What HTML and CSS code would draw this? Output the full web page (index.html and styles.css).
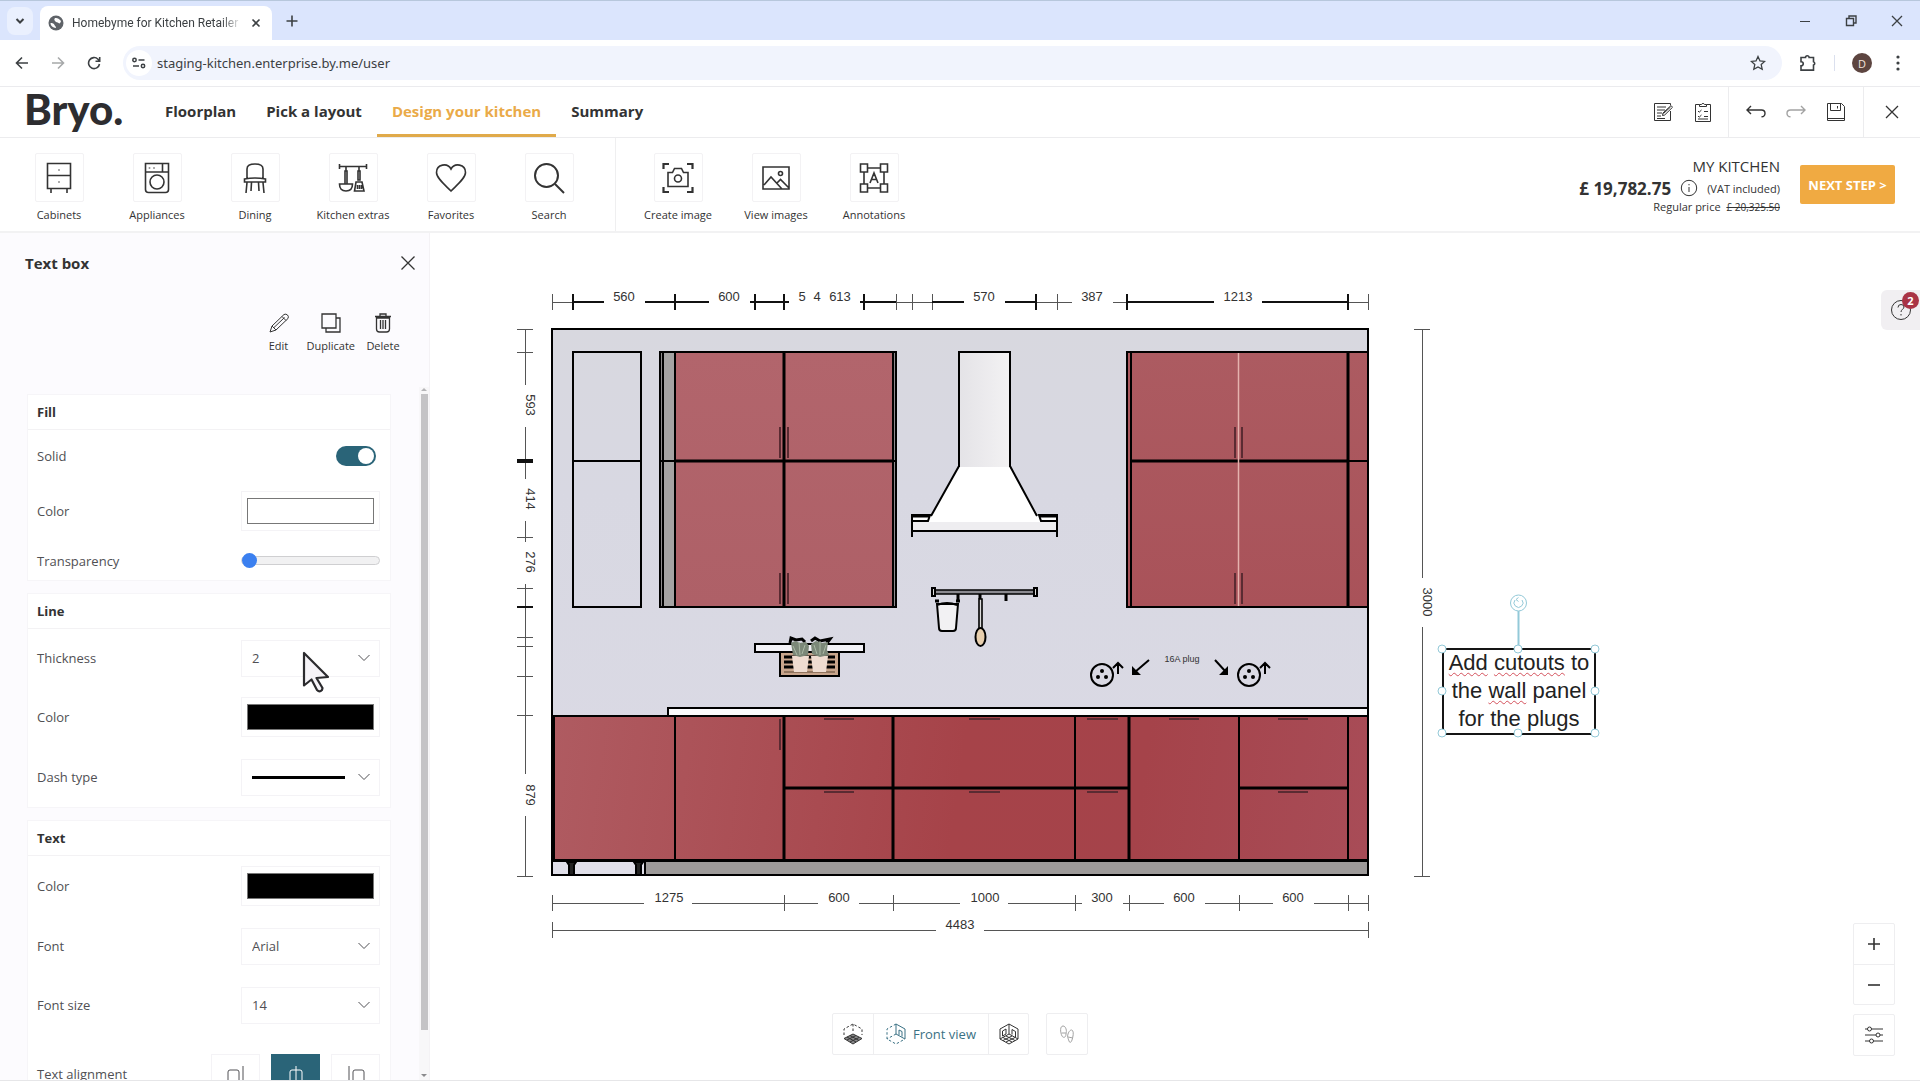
FILE: index.html
```html
<!DOCTYPE html>
<html lang="en">
<head>
<meta charset="utf-8">
<meta name="viewport" content="width=device-width, initial-scale=1">
<title>Homebyme for Kitchen Retailer</title>
<link rel="stylesheet" href="styles.css">
</head>
<body>
<div class="tabstrip">
  <button class="tab-search" aria-label="Search tabs"><svg width="10" height="10" viewBox="0 0 10 10"><path d="M1.500 3 5 6.500 8.500 3" stroke-width="2"/></svg></button>
  <div class="tab">
    <svg width="16" height="16" viewBox="0 0 16 16"><circle cx="8" cy="8" r="7.500" fill="#5f6368" stroke="none"/><path d="M2.500 8c2 0 3.500.5 4 2s1.500 1 1.500 3c-3-.5-5.500-2-5.500-5zM7 3c2-.5 4 .5 6 3-.5 2-1.500 3-2.500 2S8 7.500 7.500 6.500 5.500 5 7 3z" fill="#fff" stroke="none"/></svg>
    <span class="tab-title">Homebyme for Kitchen Retailer</span>
    <button class="tab-close" aria-label="Close tab"><svg width="10" height="10" viewBox="0 0 10 10"><path d="M1.500 1.500l7 7M8.500 1.500l-7 7" stroke-width="1.600"/></svg></button>
  </div>
  <button class="tab-new" aria-label="New tab"><svg width="12" height="12" viewBox="0 0 12 12"><path d="M6 .5v11M.5 6h11" stroke-width="1.600"/></svg></button>
  <div class="window-buttons">
    <button aria-label="Minimize"><svg width="12" height="12" viewBox="0 0 12 12"><path d="M1 6.500h10"/></svg></button>
    <button aria-label="Restore"><svg width="12" height="12" viewBox="0 0 12 12"><path d="M1.500 3.500h7v7h-7zM4 3V1h7v7H9" stroke-width="1.400"/></svg></button>
    <button aria-label="Close window"><svg width="12" height="12" viewBox="0 0 12 12"><path d="M1 1l10 10M11 1L1 11" stroke-width="1.300"/></svg></button>
  </div>
</div>

<div class="addressbar">
  <button aria-label="Back"><svg width="14" height="14" viewBox="0 0 14 14"><path d="M13 7H1.500M7 1.500 1.500 7 7 12.500" stroke-width="1.600"/></svg></button>
  <button class="dim" aria-label="Forward"><svg width="14" height="14" viewBox="0 0 14 14"><path d="M1 7h11.500M7 1.500 12.500 7 7 12.500" stroke-width="1.600"/></svg></button>
  <button aria-label="Reload"><svg width="14" height="14" viewBox="0 0 14 14"><path d="M12.500 8A5.500 5.500 0 1 1 11 3.200L12.500 5M12.700 1v4.200H8.500" stroke-width="1.600"/></svg></button>
  <div class="omnibox">
    <span class="site-info"><svg width="14" height="12" viewBox="0 0 14 12"><g stroke-width="1.500"><circle cx="2.500" cy="3" r="1.700"/><path d="M6.500 3h6M1 9h6"/><circle cx="11" cy="9" r="1.700"/></g></svg></span>
    <input class="url" type="text" aria-label="Address" value="staging-kitchen.enterprise.by.me/user">
    <button class="star" aria-label="Bookmark"><svg width="16" height="16" viewBox="0 0 16 16"><path d="M8 1.500l2 4.400 4.700.5-3.500 3.200 1 4.700L8 11.900l-4.200 2.400 1-4.700L1.300 6.400 6 5.900z" stroke-width="1.300"/></svg></button>
  </div>
  <button aria-label="Extensions"><svg width="18" height="18" viewBox="0 0 18 18"><path d="M2 3.500h4.500a1.800 1.800 0 0 1 3.600 0h4.400v4.200a1.800 1.800 0 0 1 0 3.400v5H2v-4.300c3 0 3-4 0-4z" stroke-width="1.600"/></svg></button>
  <span class="bar-divider"></span>
  <button class="avatar" aria-label="Profile">D</button>
  <button class="more" aria-label="Menu"><svg width="4" height="16" viewBox="0 0 4 16"><g fill="#3c4043" stroke="none"><circle cx="2" cy="2" r="1.600"/><circle cx="2" cy="8" r="1.600"/><circle cx="2" cy="14" r="1.600"/></g></svg></button>
</div>

<header class="app-header">
  <a class="logo" href="#">Bryo.</a>
  <nav class="steps">
    <a href="#">Floorplan</a>
    <a href="#">Pick a layout</a>
    <a class="current" href="#">Design your kitchen</a>
    <a href="#">Summary</a>
  </nav>
  <div class="header-group notes">
    <button aria-label="Notes"><svg width="20" height="20" viewBox="0 0 20 20"><path d="M17.500 9v9.500h-16v-17h16V3M4 5h9M4 8h8M4 11h5M4 14h4M4 16.500h8"/><path d="M9.500 13.500l.5-2.500L18 3.500l1.500 1.800-7.800 7.700zM10.500 11.500l7-6.500" /></svg></button>
    <button aria-label="Checklist"><svg width="18" height="20" viewBox="0 0 18 20"><path d="M5.500 2.500h-4v17h15v-17h-4M5.500 4.500v-2h2a1.600 1.600 0 0 1 3 0h2v2zM4 9l1.200 1.200L7.500 8M4 14l1.200 1.200L7.500 13M10 9.500h4M10 14.500h4M4 17h10" /></svg></button>
  </div>
  <div class="header-group">
    <button aria-label="Undo"><svg width="20" height="14" viewBox="0 0 20 14"><path d="M5 1 1 5l4 4M1 5h14.500c2.500 0 3.500 1.500 3.500 3.200 0 2-1.200 3.600-3.500 3.600" stroke-width="1.400"/></svg></button>
    <button class="dim" aria-label="Redo"><svg width="20" height="14" viewBox="0 0 20 14"><path d="M15 1l4 4-4 4M19 5H4.500C2 5 1 6.500 1 8.200c0 2 1.200 3.600 3.500 3.600" stroke-width="1.400"/></svg></button>
    <button aria-label="Save"><svg width="20" height="20" viewBox="0 0 20 20"><path d="M1.500 1.500h14l3 3v14h-17zM4.500 1.500v7h10v-7M11.500 4v2.500M1.500 16.500h17"/></svg></button>
  </div>
  <div class="header-group last">
    <button aria-label="Close"><svg width="16" height="16" viewBox="0 0 16 16"><path d="M2 2l12 12M14 2L2 14" stroke-width="1.300"/></svg></button>
  </div>
</header>

<div class="toolbar">
  <div class="tools">
    <button class="tool"><span class="tile"><svg width="26" height="32" viewBox="0 0 26 32"><path d="M1.500 1.500h23v25h-23zM1.500 13.500h23M5 27v4M21 27v4M13 7.500v1M13 19.500v1"/></svg></span>Cabinets</button>
    <button class="tool"><span class="tile"><svg width="26" height="32" viewBox="0 0 26 32"><path d="M1.500 1.500h23v26q0 3-3 3h-17q-3 0-3-3zM1.500 10h23M18.500 1.500V10M5.500 5.500v1M10 5.500v1"/><circle cx="13" cy="20" r="7"/></svg></span>Appliances</button>
    <button class="tool"><span class="tile"><svg width="26" height="32" viewBox="0 0 26 32"><path d="M5 16V7q0-5 8-5t8 5v9M2.500 17q10.500-2 21 0v3h-21zM5 20.500 4 31M9.500 20.500 9 29M21 20.500 22 31M16.500 20.500l.5 8.500"/></svg></span>Dining</button>
    <button class="tool"><span class="tile"><svg width="30" height="32" viewBox="0 0 30 32"><path d="M1.500 2v5M28.500 2v5M1.500 4.500h27M8 5v4M21 5v4M7 9h2v13H7zM20 9h2v9h-2zM1.500 22h13q0 7-6.500 7t-6.500-7zM18 20h6l2 9h-9.500zM19.500 23v4M21.500 23v4M23.500 23v4"/></svg></span>Kitchen extras</button>
    <button class="tool"><span class="tile"><svg width="32" height="32" viewBox="0 0 32 32"><path d="M16 29C9 22 1.500 16 1.500 10.500 1.500 2 12.500.5 16 7c3.500-6.500 14.500-5 14.500 3.500C30.500 16 23 22 16 29z"/></svg></span>Favorites</button>
    <button class="tool"><span class="tile"><svg width="32" height="32" viewBox="0 0 32 32"><circle cx="13.500" cy="13.500" r="11.500" stroke-width="2"/><path d="M22 22l9 9" stroke-width="2"/></svg></span>Search</button>
  </div>
  <div class="tools second">
    <button class="tool"><span class="tile"><svg width="32" height="32" viewBox="0 0 32 32"><path d="M1.500 7V2H7M25 2h5.500v5M1.500 25v5H7M25 30h5.500v-5" stroke-width="2.200"/><path d="M6 10.500h4.500l2-4h7l2 4H26v14H6z"/><circle cx="16" cy="16.500" r="3.500"/></svg></span>Create image</button>
    <button class="tool"><span class="tile"><svg width="28" height="26" viewBox="0 0 28 26"><path d="M1 2h26v22H1zM2 20l7-8 11 12M15 18l3.500-3.500L27 23"/><circle cx="18.500" cy="8.500" r="2"/></svg></span>View images</button>
    <button class="tool"><span class="tile"><svg width="30" height="32" viewBox="0 0 30 32"><path d="M1.500 2h7v8h-7zM21.500 2h7v8h-7zM1.500 22h7v8h-7zM21.500 22h7v8h-7zM8.500 6h13M8.500 26h13M5 10v12M25 10v12M11 21l4-10 4 10M12.500 17.500h5"/></svg></span>Annotations</button>
  </div>
  <div class="price">
    <div class="project">MY KITCHEN</div>
    <div class="total"><strong>£ 19,782.75</strong><svg width="18" height="18" viewBox="0 0 18 18"><circle cx="9" cy="9" r="7.700"/><path d="M9 8v5M9 5v1.300"/></svg><span>(VAT included)</span></div>
    <div class="regular">Regular price <s>£ 20,325.50</s></div>
  </div>
  <button class="next">NEXT STEP &gt;</button>
</div>

<main class="workspace">
  <div class="drawing">
    <svg width="1300" height="670" viewBox="310 280 1300 670" role="img" aria-label="Front view of the kitchen">
      <defs>
        <linearGradient id="wall" x1="0" y1="0" x2="0" y2="1"><stop offset="0" stop-color="#d8d8df"/><stop offset=".3" stop-color="#d8d8e2"/><stop offset="1" stop-color="#dbdae5"/></linearGradient>
        <linearGradient id="base" gradientUnits="userSpaceOnUse" x1="553" y1="720" x2="1368" y2="830"><stop offset="0" stop-color="#af5b61"/><stop offset=".5" stop-color="#a64349"/><stop offset=".72" stop-color="#a5434a"/><stop offset="1" stop-color="#a84c57"/></linearGradient>
        <linearGradient id="upperA" x1="0" y1="0" x2="0" y2="1"><stop offset="0" stop-color="#b2656c"/><stop offset="1" stop-color="#ae6067"/></linearGradient>
        <linearGradient id="upperB" x1="0" y1="0" x2="0" y2="1"><stop offset="0" stop-color="#ac5b61"/><stop offset="1" stop-color="#a95259"/></linearGradient>
        <linearGradient id="steel" x1="0" y1="0" x2="1" y2="0"><stop offset="0" stop-color="#e4e3e7"/><stop offset="1" stop-color="#f3f2f3"/></linearGradient>
      </defs>
      <g class="dims">
        <path d="M552 302h52M645 302h64M750 302h39M860 302h104M1005 302h67M1113 302h101M1262 302h106"/>
        <path d="M552 294v16M573 294v16M675 294v16M755 294v16M784 294v16M864 294v16M896 294v16M912 294v16M932 294v16M1036 294v16M1057 294v16M1127 294v16M1348 294v16M1368 294v16"/>
        <path class="strong" d="M573 302h31M645 302h64M750 302h39M860 302h36M932 302h32M1005 302h31M1127 302h87M1262 302h86M573 294v16M675 294v16M755 294v16M784 294v16M864 294v16M1036 294v16M1127 294v16M1348 294v16"/>
        <path d="M525 329v56M525 427v52M525 521v21M525 584v190M525 816v60M517 329h16M517 352h16M517 537h16M517 588h16M517 637h16M517 646h16M517 676h16M517 715h16M517 876h16"/>
        <path class="strong" d="M517 460h16M517 462h16M517 607h16"/>
        <path d="M1422 329v249M1422 627v249M1414 329h16M1414 876h16"/>
        <path d="M552 903h92M692 903h126M859 903h101M1008 903h74M1123 903h41M1205 903h68M1314 903h54M552 895v16M784 895v16M893 895v16M1075 895v16M1129 895v16M1239 895v16M1348 895v16M1368 895v16"/>
        <path d="M552 930h384M984 930h384M552 922v16M1368 922v16"/>
      </g>
      <g class="dim-text">
        <text x="624" y="301">560</text><text x="729" y="301">600</text><text x="802" y="301">5</text><text x="817" y="301">4</text><text x="840" y="301">613</text><text x="984" y="301">570</text><text x="1092" y="301">387</text><text x="1238" y="301">1213</text>
        <text transform="translate(526 405) rotate(90)">593</text><text transform="translate(526 499) rotate(90)">414</text><text transform="translate(526 562) rotate(90)">276</text><text transform="translate(526 795) rotate(90)">879</text><text transform="translate(1423 602) rotate(90)">3000</text>
        <text x="669" y="902">1275</text><text x="839" y="902">600</text><text x="985" y="902">1000</text><text x="1102" y="902">300</text><text x="1184" y="902">600</text><text x="1293" y="902">600</text><text x="960" y="929">4483</text>
      </g>
      <g class="ink">
        <rect x="552" y="329" width="816" height="546" fill="url(#wall)"/>
        <path d="M573 352h68v255h-68zM573 461h68"/>
        <rect x="660" y="352" width="236" height="255" fill="#8f8c8e"/>
        <rect x="663" y="352" width="12" height="255" fill="#a5a3a3"/>
        <rect x="675" y="352" width="218" height="255" fill="url(#upperA)"/>
        <path d="M784 352v255M675 461h218" stroke-width="3"/><path d="M660 461h236"/>
        <rect x="1127" y="352" width="241" height="255" fill="url(#upperB)"/>
        <path d="M1131 352v255"/><path d="M1348 352v255M1131 461h217" stroke-width="3"/><path d="M1348 461h20"/>
        <path d="M1238.500 353v253" stroke="#e5b3ae" stroke-width="1.500"/>
        <path class="handle" d="M780 427v31M788 427v31M780 573v31M788 573v31M1235 427v31M1242 427v31M1235 573v31M1242 573v31"/>
        <rect x="959" y="352" width="51" height="116" fill="url(#steel)"/>
        <path d="M912 515h19l28-48h51l28 48h19v16H912z" fill="#fff" stroke="none"/>
        <path d="M913 522h143v8H913z" fill="#eeedf0" stroke="none"/>
        <path d="M959 466l-28 50M1010 466l27 50M912 537v-22h18l-2 6h-15M1057 537v-22h-18l2 6h15M912 531h145"/>
        <path d="M912 516h18M1039 516h18" stroke-width="3"/>
        <path d="M933 590h102v4H933z" fill="#8b8a90" stroke-width="1.600"/><path d="M932 588h3v8h-3zM1034 588h3v8h-3z" fill="#ddd"/>
        <path d="M958 594v8M1006 594v7M980 594v5M935 601h4M956 601h4" stroke-width="3"/>
        <path d="M937 604l2 24q0 3 3 3h11q3 0 3-3l2-24zM937 605q10-4 20 0" fill="#f2f1f3"/>
        <path d="M979 599h3v30h-3z" fill="#ddd" stroke-width="1.600"/><ellipse cx="980.500" cy="637" rx="5" ry="9" fill="#e8cfae"/>
        <path d="M755 644h109v8H755z" fill="#f3f2f7"/><path d="M780 652h59v24h-59z" fill="#c8a58c"/>
        <path d="M784 657h51M784 662h51M784 667h51" stroke-width="3"/><path d="M784 672h51" stroke="#5d4632" stroke-width="1"/>
        <path d="M792 656h17l-2 16h-13zM811 656h17l-2 16h-13z" fill="#efdcd0" stroke="none"/>
        <path d="M790 643l1-5 5 2 6-1 3 3M811 641l4-3 5 3 10-2-3 4" stroke-width="3"/>
        <path d="M791 643l4-2 5 2 6-1 3 4-1 9-8 2-7-2zM811 644l5-3 6 2 6-1-1 8 2 5-9 2-8-3z" fill="#7b8878" stroke="none"/>
        <path d="M793 646l4 9M799 642l1 13M805 645l-3 9M814 645l3 9M820 641v14M826 645l-3 9" stroke="#a9b8a4" stroke-width="1"/>
        <rect x="668" y="708" width="700" height="8" fill="#fbfbfc"/>
        <rect x="553" y="716" width="815" height="144" fill="url(#base)"/>
        <path d="M675 716v144M1075 716v144M1239 716v144M1348 716v144"/>
        <path d="M784 716v144M893 716v144M1129 716v144M784 788h345M1239 788h109" stroke-width="3"/><path d="M554 716v144"/>
        <path class="handle" d="M780 719v31M824 719h30M969 719h31M1087 719h31M1169 719h30M1278 719h30M824 792h30M969 792h31M1087 792h31M1278 792h30"/>
        <rect x="645" y="861" width="723" height="14" fill="#9d9a99"/>
        <path d="M552 861h93v14h-93z" fill="#e0dfe9"/>
        <path d="M567 862h9l-2 3v10h-5v-10zM634 862h9l-2 3v10h-5v-10z" fill="#222"/>
        <g fill="none"><circle cx="1102" cy="675" r="11"/><circle cx="1249" cy="675" r="11"/></g>
        <path d="M1118 674v-11M1113 668l5-5 5 5M1265 674v-11M1260 668l5-5 5 5"/>
        <g fill="#000" stroke="none"><circle cx="1102" cy="671" r="2"/><circle cx="1098" cy="677" r="2"/><circle cx="1106" cy="677" r="2"/><circle cx="1249" cy="671" r="2"/><circle cx="1245" cy="677" r="2"/><circle cx="1253" cy="677" r="2"/><path d="M1132 666v9h9zM1228 666v9h-9z"/></g>
        <path d="M1149 660l-14 12M1215 660l11 12"/>
      </g>
      <text class="plug" x="1182" y="662">16A plug</text>
    </svg>
    <div class="note">
      <p><u>Add</u> <u>cutouts</u> to<br>the <u>wall</u> panel<br>for the plugs</p>
      <svg class="note-frame" width="166" height="150" viewBox="-6 -60 166 150">
        <path d="M76.500-38V0" stroke-width="2"/>
        <g fill="#fff"><circle cx="0" cy="1" r="4"/><circle cx="76" cy="1" r="4"/><circle cx="153" cy="1" r="4"/><circle cx="0" cy="43" r="4"/><circle cx="153" cy="43" r="4"/><circle cx="0" cy="85" r="4"/><circle cx="76" cy="85" r="4"/><circle cx="153" cy="85" r="4"/><circle cx="76.500" cy="-45" r="8"/></g>
        <path d="M80-48a4.500 4.500 0 1 1-7 0M76.500-50.500l-2.500 2 2.500 2"/>
      </svg>
    </div>
  </div>

  <aside class="panel">
    <div class="panel-head"><h2>Text box</h2><button aria-label="Close panel"><svg width="16" height="16" viewBox="0 0 16 16"><path d="M1.500 1.500l13 13M14.500 1.500l-13 13" stroke-width="1.300"/></svg></button></div>
    <div class="actions">
      <button><svg width="20" height="20" viewBox="0 0 20 20"><path d="M1 19l2-6L15 1.500q2-1 3.500.5t.5 3.500L7 17zM3 13l4 4M13 3.500l4 4M5 14.500 15.500 4.500"/></svg>Edit</button>
      <button><svg width="20" height="20" viewBox="0 0 20 20"><path d="M1 1h14v14H1zM15 5h4v14H5v-4" stroke-width="1.300"/></svg>Duplicate</button>
      <button><svg width="20" height="20" viewBox="0 0 20 20"><path d="M2 3.500h16M7 3V1h6v2M3.500 5v11q0 3 3 3h7q3 0 3-3V5zM7.500 7v9M10 7v9M12.500 7v9" stroke-width="1.300"/></svg>Delete</button>
    </div>
    <div class="scroll">
      <div class="cards">
        <section class="card">
          <h3>Fill</h3>
          <div class="row short"><label for="solid">Solid</label><input class="switch" id="solid" type="checkbox" role="switch" checked></div>
          <div class="row"><label for="fill-color">Color</label><input class="swatch" id="fill-color" type="color" value="#ffffff"></div>
          <div class="row slim"><label for="transparency">Transparency</label><input class="slider" id="transparency" type="range" min="0" max="100" value="0"></div>
        </section>
        <section class="card">
          <h3>Line</h3>
          <div class="row compact"><label for="thickness">Thickness</label><span class="select"><select id="thickness"><option>2</option></select><svg width="12" height="8" viewBox="0 0 12 8"><path d="M.5 1 6 6.500 11.500 1"/></svg></span></div>
          <div class="row"><label for="line-color">Color</label><input class="swatch" id="line-color" type="color" value="#000000"></div>
          <div class="row"><label for="dash">Dash type</label><span class="select"><select id="dash"><option value="solid"></option></select><span class="dash"></span><svg width="12" height="8" viewBox="0 0 12 8"><path d="M.5 1 6 6.500 11.500 1"/></svg></span></div>
        </section>
        <section class="card">
          <h3>Text</h3>
          <div class="row"><label for="text-color">Color</label><input class="swatch" id="text-color" type="color" value="#000000"></div>
          <div class="row"><label for="font">Font</label><span class="select"><select id="font"><option>Arial</option></select><svg width="12" height="8" viewBox="0 0 12 8"><path d="M.5 1 6 6.500 11.500 1"/></svg></span></div>
          <div class="row compact"><label for="font-size">Font size</label><span class="select"><select id="font-size"><option>14</option></select><svg width="12" height="8" viewBox="0 0 12 8"><path d="M.5 1 6 6.500 11.500 1"/></svg></span></div>
          <div class="row tall" role="group" aria-labelledby="align-label"><span id="align-label">Text alignment</span>
            <span class="align">
              <button aria-label="Right"><svg width="18" height="18" viewBox="0 0 18 18"><path d="M16 1v16M1 17V7q0-2 2-2h7q2 0 2 2v10"/></svg></button>
              <button class="on" aria-label="Center"><svg width="18" height="18" viewBox="0 0 18 18"><path d="M9 1v16M3 17V7q0-2 2-2h8q2 0 2 2v10"/></svg></button>
              <button aria-label="Left"><svg width="18" height="18" viewBox="0 0 18 18"><path d="M2 1v16M6 17V7q0-2 2-2h7q2 0 2 2v10"/></svg></button>
            </span>
          </div>
        </section>
      </div>
      <div class="scrollbar" aria-hidden="true"><span class="arrow up"></span><span class="thumb"></span><span class="arrow down"></span></div>
    </div>
  </aside>

  <button class="help" aria-label="Help"><svg width="22" height="22" viewBox="0 0 22 22"><circle cx="11" cy="11" r="9.500"/><path d="M8 8.500q0-3 3-3t3 2.500c0 2-3 2.500-3 5M11 15v1.500"/></svg><span class="badge">2</span></button>

  <div class="views">
    <div class="box-group">
      <button aria-label="Top view"><svg width="20" height="22" viewBox="0 0 20 22"><path d="M1 15.500 10 11l9 4.500-9 5.500z" fill="#8a8a8c"/><path d="M4 17l9-4.500M7 19l9-4.500M4 14l9 5M7 12.500l9 5"/><path d="M1 12V6l9-5 9 5v6M10 1v9" stroke-dasharray="2.500 2"/></svg></button>
      <button class="active"><svg width="20" height="22" viewBox="0 0 20 22"><path d="M10 1l9 5v10l-9-5zM13 7l3 1.500v5M13 7v5"/><path d="M10 1 1 6v10l9 5 9-5M10 11l-9 5" stroke-dasharray="2.500 2"/></svg>Front view</button>
      <button aria-label="3D view"><svg width="20" height="22" viewBox="0 0 20 22"><path d="M10 1l9 5v10l-9 5-9-5V6zM10 1v10l9 5M10 11l-9 5M3.500 8 7 6v5l-3.500 2zM13 6.500l3.500 2V14M13 6.500v5M4 17.500l9-4.500M7 19l9-4.500M4 14.500l9 4.500M7 13l9 4.500"/></svg></button>
    </div>
    <div class="box-group">
      <button class="dim" aria-label="Walk"><svg width="14" height="18" viewBox="0 0 14 18"><path d="M2 11C0 7 0 1 3 1s4 5 3 8c0 4-3 4-4 2zM1.500 8h4.500M9 16c-1-3-2-4-1-7s3-5 4.500-3.500S13 12 12 15s-2.500 3-3 1zM8 12l5 1"/></svg></button>
    </div>
  </div>

  <div class="zoom">
    <div class="box-group vertical">
      <button aria-label="Zoom in"><svg width="14" height="14" viewBox="0 0 14 14"><path d="M7 1v12M1 7h12" stroke-width="1.600"/></svg></button>
      <button aria-label="Zoom out"><svg width="14" height="14" viewBox="0 0 14 14"><path d="M1 7h12" stroke-width="1.600"/></svg></button>
    </div>
    <div class="box-group">
      <button aria-label="Display settings"><svg width="20" height="18" viewBox="0 0 20 18"><path d="M1 3h18M1 9h18M1 15h18"/><g fill="#fff"><circle cx="5.500" cy="3" r="2"/><circle cx="14" cy="9" r="2"/><circle cx="7.500" cy="15" r="2"/></g></svg></button>
    </div>
  </div>

  <svg class="pointer" width="28" height="42" viewBox="0 0 28 42"><path d="M2 2v32.500l7.500-6L15 39q2.500 2.500 5 0l.5-2-6-10L26 26z" fill="#f6f4f8" stroke="#2b2b2e" stroke-width="2.200" stroke-linejoin="round"/></svg>
</main>
</body>
</html>
```
FILE: styles.css
```css
* { box-sizing: border-box; }

body {
  margin: 0;
  height: 100vh;
  display: flex;
  flex-direction: column;
  border-bottom: 1px solid #e6e6e8;
  background: #fff;
  color: #333;
  font-family: "Open Sans", "Noto Sans", sans-serif;
  font-size: 13px;
}

button, input, select { font: inherit; color: inherit; }
button { display: flex; align-items: center; justify-content: center; padding: 0; border: 0; background: none; }
a { color: inherit; text-decoration: none; }
h2, h3, p { margin: 0; }
svg { display: block; flex: none; fill: none; stroke: currentColor; }

/* Browser window */
.tabstrip { display: flex; align-items: center; height: 40px; padding-left: 7px; border-top: 1px solid #b7c7dc; background: #dbe5fd; color: #3c4043; }
.tab-search { width: 26px; height: 28px; border-radius: 8px; background: #eaf0fe; }
.tab { display: flex; align-items: center; align-self: flex-end; width: 232px; height: 34px; margin-left: 7px; padding: 0 10px 0 8px; gap: 8px; border-radius: 8px 8px 0 0; background: #fff; }
.tab-title { flex: 1; overflow: hidden; white-space: nowrap; font-family: Roboto, sans-serif; font-size: 12px; -webkit-mask-image: linear-gradient(90deg, #000 88%, transparent); }
.tab-close { width: 12px; }
.tab-new { width: 24px; margin-left: 8px; }
.window-buttons { display: flex; margin-left: auto; }
.window-buttons button { width: 46px; height: 38px; }

.addressbar { display: flex; align-items: center; height: 47px; padding: 0 20px 0 15px; border-bottom: 1px solid #ebebee; background: #fff; color: #3c4043; }
.addressbar > button { margin-right: 22px; }
.dim { opacity: .45; }
.omnibox { display: flex; align-items: center; flex: 1; height: 34px; margin-right: 17px; padding: 0 16px 0 3px; border-radius: 17px; background: #f1f4fd; }
.site-info { display: grid; place-items: center; width: 26px; height: 26px; border-radius: 13px; background: #fff; }
.url { flex: 1; padding: 0 0 0 5px; border: 0; outline: 0; background: none; font-family: "Noto Sans", sans-serif; font-size: 13px; }
.addressbar > button:nth-of-type(4) { margin-right: 17px; }
.bar-divider { width: 1px; height: 16px; margin-right: 17px; background: #dbe0ee; }
.addressbar > .avatar { width: 20px; height: 20px; margin-right: 24px; border-radius: 10px; background: #5d4540; color: #f3e3dd; font-size: 11px; }
.addressbar > .more { margin-right: 0; }

/* Application header */
.app-header { display: flex; align-items: stretch; height: 51px; border-bottom: 1px solid #ececee; }
.logo { width: 126px; margin-left: 24px; color: #2d2d30; font: 900 42px/44px Lato, sans-serif; }
.steps { display: flex; flex: 1; font-size: 15px; font-weight: 700; line-height: 20px; }
.steps a { display: flex; align-items: center; padding: 0 15px; border-bottom: 3px solid transparent; white-space: nowrap; }
.steps .current { border-color: #e0aa4a; color: #eaaa48; }
.header-group { display: flex; align-items: center; gap: 20px; padding: 0 17px; border-left: 1px solid #ececee; }
.header-group.notes { gap: 21px; padding-right: 16px; border-left: 0; }
.header-group.last { width: 57px; padding: 0 0 0 20px; }

/* Catalogue toolbar */
.toolbar { display: flex; align-items: center; height: 95px; padding-right: 25px; border-bottom: 2px solid #f2f2f3; }
.tools { display: flex; align-self: stretch; padding: 0 17px 0 10px; }
.tools.second { padding: 0 0 0 13px; border-left: 1px solid #efeff0; }
.tool { flex-direction: column; justify-content: flex-start; width: 98px; padding-top: 15px; gap: 4px; font-size: 11px; line-height: 18px; white-space: nowrap; }
.tile { display: grid; place-items: center; width: 49px; height: 49px; border: 1px solid #f3f2f4; border-radius: 2px; }
.tile svg { stroke-width: 1.6; }
.price { margin-left: auto; text-align: right; }
.project { font-size: 15px; line-height: 21px; }
.total { display: flex; align-items: center; justify-content: flex-end; height: 23px; font-size: 11px; }
.total strong { font-size: 17px; }
.total svg { margin: 0 9px; }
.regular { font-size: 11px; line-height: 14px; }
.regular s { margin-left: 3px; font-size: 10px; }
.next { width: 95px; height: 39px; margin-left: 20px; border-radius: 2px; background: #f0aa42; color: #fff; font-size: 13px; font-weight: 700; }

/* Workspace: every child shares one cell and is aligned inside it */
.workspace { position: relative; display: grid; grid-template: minmax(0, 1fr) / minmax(0, 1fr); flex: 1; min-height: 0; overflow: hidden; }
.workspace > * { grid-area: 1 / 1; }

.drawing { position: relative; justify-self: center; align-self: start; width: 1300px; margin-top: 47px; }
.dims { stroke: #555; stroke-width: 1; shape-rendering: crispEdges; }
.strong { stroke: #111; stroke-width: 2; }
.dim-text text { fill: #333; stroke: none; text-anchor: middle; font: 13px "Liberation Sans", Arial, sans-serif; }
.ink { stroke: #000; stroke-width: 2; }
.handle { stroke: #5a2b32; stroke-width: 2; }
.plug { fill: #333; stroke: none; text-anchor: middle; font: 9px "Liberation Sans", Arial, sans-serif; }
.note { position: absolute; left: 1132px; top: 368px; width: 154px; height: 87px; border: 2px solid #151515; text-align: center; color: #222; font: 22px/28px "Liberation Sans", Arial, sans-serif; }
.note p { margin-top: -1px; white-space: nowrap; }
.note u { text-decoration: underline wavy #d4515c 1px; text-underline-offset: 2px; text-decoration-skip-ink: none; }
.note-frame { position: absolute; left: -8px; top: -62px; stroke: #93c9d8; }

/* Properties panel */
.panel { justify-self: start; display: flex; flex-direction: column; width: 430px; min-height: 0; border-right: 1px solid #f4f2f5; background: #fcfbfe; }
.panel-head { display: flex; align-items: center; justify-content: space-between; height: 59px; padding: 0 13px 0 25px; }
.panel-head h2 { font-size: 15px; line-height: 20px; }
.actions { display: flex; justify-content: flex-end; gap: 11px; height: 95px; padding: 21px 29px 0 0; }
.actions button { flex-direction: column; justify-content: flex-start; min-width: 34px; gap: 4px; font-size: 11px; line-height: 18px; }
.scroll { display: flex; flex: 1; min-height: 0; }
.cards { display: flex; flex-direction: column; flex: 1; gap: 12px; padding: 7px 28px 0 27px; overflow-y: auto; scrollbar-width: none; }
.card { flex: none; border: 1px solid #f6f5f8; background: #fff; }
.card h3 { height: 35px; padding-left: 9px; border-bottom: 1px solid #f3f2f4; font-size: 13px; line-height: 34px; }
.row { display: flex; align-items: center; justify-content: space-between; height: 60px; padding: 0 10px 0 9px; color: #505054; font-size: 13px; }
.row.short { height: 51px; padding-right: 14px; }
.row.compact { height: 58px; }
.row.slim { height: 39px; }
.row.tall { height: 80px; }

.switch { position: relative; appearance: none; width: 40px; height: 20px; margin: 0; padding: 2px; border-radius: 10px; background: #2a6478; }
.switch::before { content: ""; display: block; width: 16px; height: 16px; margin-left: auto; border-radius: 8px; background: #fff; }
.swatch { appearance: none; width: 139px; height: 40px; padding: 6px 5px; border: 1px solid #f4f3f6; background: #fff; }
.swatch::-webkit-color-swatch-wrapper { padding: 0; }
.swatch::-webkit-color-swatch { border: 1px solid #777; border-radius: 0; }
.slider { appearance: none; width: 139px; height: 9px; margin: 0; border: 1px solid #cfcfd1; border-radius: 5px; background: #f1f1f2; }
.slider::-webkit-slider-thumb { appearance: none; width: 15px; height: 15px; border-radius: 8px; background: #3b80f0; }
.select { display: grid; align-items: center; width: 139px; height: 37px; border: 1px solid #f4f3f6; }
.select > * { grid-area: 1 / 1; }
.select select { appearance: none; width: 100%; height: 100%; padding: 0 10px; border: 0; background: none; }
.select svg { justify-self: end; margin-right: 9px; pointer-events: none; }
.dash { width: 93px; height: 3px; margin-left: 10px; background: #000; }
.align { display: flex; gap: 11px; }
.align button { width: 49px; height: 41px; border: 1px solid #f4f3f6; }
.align .on { border-color: #2a6478; background: #2a6478; color: #fff; }

.scrollbar { display: flex; flex-direction: column; align-items: center; width: 10px; padding-bottom: 3px; background: #f8f7f9; }
.scrollbar .thumb { width: 7px; flex: 0 1 636px; margin: 3px 0 auto; background: #c4c3c6; }
.arrow { border: 3px solid transparent; }
.arrow.up { margin-top: 1px; border-bottom-color: #b5b5b8; border-top-width: 0; }
.arrow.down { border-top-color: #8a8a8d; border-bottom-width: 0; }

/* Canvas controls */
.help { position: relative; justify-self: end; align-self: start; width: 39px; height: 40px; margin-top: 57px; border-radius: 6px 0 0 6px; background: #f1eff2; }
.badge { position: absolute; top: 2px; right: 1px; width: 17px; height: 17px; border-radius: 9px; background: #a93345; color: #fff; font-size: 11px; font-weight: 700; line-height: 17px; }
.views { justify-self: center; align-self: end; display: flex; gap: 17px; margin-bottom: 25px; }
.zoom { justify-self: end; align-self: end; display: flex; flex-direction: column; gap: 9px; margin: 0 25px 24px 0; }
.box-group { display: flex; border: 1px solid #eeeef0; border-radius: 2px; background: #fff; }
.box-group button { min-width: 40px; height: 40px; }
.box-group button + button { border-left: 1px solid #eeeef0; }
.box-group.vertical { flex-direction: column; }
.box-group.vertical button + button { border-left: 0; border-top: 1px solid #eeeef0; }
.box-group .active { gap: 7px; width: 115px; color: #3a7184; font-size: 13px; }
.pointer { position: absolute; left: 302px; top: 418px; }
```
